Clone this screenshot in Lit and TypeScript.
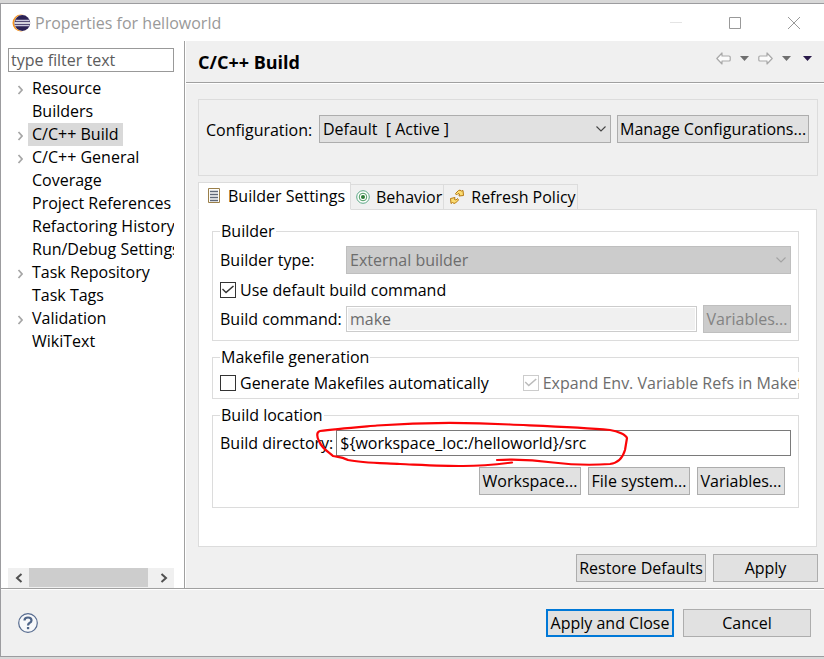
import { LitElement, html, css, svg } from "lit";
import { customElement, state } from "lit/decorators.js";
import { classMap } from "lit/directives/class-map.js";

interface Category {
  name: string;
  branch?: boolean;
}

const CATEGORIES: Category[] = [
  { name: "Resource", branch: true },
  { name: "Builders" },
  { name: "C/C++ Build", branch: true },
  { name: "C/C++ General", branch: true },
  { name: "Coverage" },
  { name: "Project References" },
  { name: "Refactoring History" },
  { name: "Run/Debug Settings" },
  { name: "Task Repository", branch: true },
  { name: "Task Tags" },
  { name: "Validation", branch: true },
  { name: "WikiText" },
];

const chevron = html`<svg class="chevron" width="10" height="6" viewBox="0 0 10 6" aria-hidden="true">
  <path d="M0.5 0.5 5 5 9.5 0.5" fill="none" stroke="currentColor" stroke-width="1.1" />
</svg>`;

const backArrow = svg`<path d="M.8 6.500 6 1V4H13Q14.200 4 14.200 5V8Q14.200 9 13 9H6V12Z" fill="#fbfbfb" stroke="#a9a9a9" stroke-width="1.2" stroke-linejoin="round"/>`;

@customElement("app-root")
export class AppRoot extends LitElement {
  @state() private selected = "C/C++ Build";

  static styles = css`
    :host {
      display: block;
      font: 16px/20px "Open Sans", "Noto Sans", sans-serif;
      color: #000;
      --face: #f0f0f0;
      --line: #a0a0a0;
      --soft: #dcdcdc;
    }
    * {
      box-sizing: border-box;
    }
    .desktop {
      display: flex;
      flex-direction: column;
      min-height: 100vh;
      padding: 3px 0 2px;
      background: #d8d8d8;
    }
    .window {
      flex: 1;
      display: flex;
      flex-direction: column;
      border: 1px solid #9c9c9f;
      border-right: 0;
      background: #fff;
    }
    .titlebar {
      display: flex;
      align-items: center;
      height: 37px;
      padding: 0 23px 0 11px;
      color: #999;
    }
    .titlebar h1 {
      flex: 1;
      margin: 0 0 0 4px;
      font: inherit;
    }
    .caption-buttons {
      display: flex;
      gap: 45px;
    }
    button,
    input,
    select {
      font: inherit;
      color: inherit;
      margin: 0;
      border-radius: 0;
    }
    .bare {
      display: flex;
      padding: 0;
      border: 0;
      background: none;
    }
    .body {
      flex: 1;
      display: flex;
      min-height: 0;
    }
    .sidebar {
      width: 184px;
      flex: none;
      display: flex;
      flex-direction: column;
      padding: 7px 10px 0 7px;
      border-right: 1px solid var(--line);
    }
    .filter {
      width: 100%;
      height: 24px;
      padding: 0 2px;
      border: 1px solid #999;
      background: #fff;
    }
    .filter::placeholder {
      color: #5c5c5c;
      opacity: 1;
    }
    .tree {
      flex: 1;
      margin: 5px 0 0;
      padding: 0;
      list-style: none;
      overflow: hidden;
    }
    .node {
      display: flex;
      align-items: center;
      height: 23px;
      white-space: nowrap;
    }
    .twist {
      width: 20px;
      flex: none;
      display: flex;
      padding: 2px 0 0 9px;
    }
    .node-name {
      padding: 0 4px;
      line-height: 23px;
      border: 0;
      background: none;
    }
    .node-name.selected {
      background: #d9d9d9;
    }
    .scrollbar {
      display: flex;
      align-items: center;
      height: 20px;
      background: var(--face);
    }
    .scrollbar .bare {
      flex: none;
      width: 21px;
      justify-content: center;
    }
    .track {
      flex: 1;
      height: 20px;
      padding-right: 5px;
    }
    .thumb {
      height: 19px;
      background: #cdcdcd;
    }
    .page {
      flex: 1;
      min-width: 0;
      display: flex;
      flex-direction: column;
      margin-left: 1px;
      background: var(--face);
    }
    .page-head {
      display: flex;
      align-items: center;
      height: 42px;
      padding: 0 12px;
      border-bottom: 1px solid var(--line);
      box-shadow: 0 1px 0 #fff;
    }
    .page-head h2 {
      flex: 1;
      margin: 0;
      font: inherit;
      font-size: 18px;
      font-weight: 700;
    }
    .nav {
      display: flex;
      align-items: center;
      gap: 9px;
      margin-top: -6px;
    }
    .nav .menu {
      margin-left: 3px;
    }
    .page-body {
      flex: 1;
      display: flex;
      flex-direction: column;
      padding: 16px 6px 6px 12px;
    }
    .config {
      display: flex;
      align-items: flex-start;
      gap: 6px;
      height: 77px;
      padding: 15px 8px 0 7px;
      border: 1px solid var(--soft);
    }
    .config label {
      width: 107px;
      line-height: 30px;
      white-space: nowrap;
    }
    .combo {
      position: relative;
      flex: 1;
      min-width: 0;
      height: 28px;
    }
    .combo select {
      appearance: none;
      width: 100%;
      height: 28px;
      padding: 0 20px 0 3px;
      border: 1px solid #adadad;
      background: #e1e1e1;
    }
    .combo select:disabled {
      color: #6d6d6d;
      border-color: #bfbfbf;
      background: #ccc;
      opacity: 1;
    }
    .chevron {
      position: absolute;
      right: 5px;
      top: 11px;
      color: #444;
      pointer-events: none;
    }
    select:disabled + .chevron {
      color: #a3a3a3;
    }
    .push {
      height: 28px;
      padding: 0 2px;
      border: 1px solid #adadad;
      background: #e1e1e1;
      white-space: nowrap;
    }
    .push:disabled {
      color: #838383;
      border-color: #bfbfbf;
      background: #ccc;
    }
    .tabs {
      display: flex;
      align-items: flex-end;
      height: 34px;
      margin-bottom: -1px;
    }
    .tab {
      display: flex;
      align-items: center;
      gap: 6px;
      height: 26px;
      padding: 0 1px 0 5px;
      border: 1px solid var(--soft);
      border-left: 0;
      background: var(--face);
      white-space: nowrap;
    }
    .tab.active {
      z-index: 1;
      height: 28px;
      padding: 0 5px 0 7px;
      border-left: 1px solid var(--soft);
      border-bottom-color: #fff;
      background: #fff;
    }
    .panel {
      flex: 1;
      display: flex;
      flex-direction: column;
      gap: 6px;
      margin-right: 1px;
      padding: 11px 17px 11px 13px;
      border: 1px solid var(--soft);
      background: #fff;
    }
    fieldset {
      min-width: 0;
      margin: 0;
      padding: 5px 7px;
      border: 1px solid var(--soft);
    }
    legend {
      padding: 0 1px;
      height: 20px;
    }
    .builder {
      display: grid;
      grid-template-columns: 120px minmax(0, 1fr) auto;
      gap: 5px 6px;
      align-items: center;
      padding-bottom: 2px;
      white-space: nowrap;
    }
    .span2 {
      grid-column: span 2;
    }
    .span3 {
      grid-column: span 3;
    }
    .check {
      display: flex;
      align-items: center;
      gap: 4px;
      height: 21px;
      white-space: nowrap;
    }
    .check input {
      appearance: none;
      flex: none;
      width: 16px;
      height: 16px;
      border: 1px solid #333;
      background: #fff;
    }
    .check input:checked::before {
      content: "";
      display: block;
      width: 14px;
      height: 14px;
      background: #333;
      clip-path: polygon(1px 7px, 2px 6px, 5px 9px, 12px 3px, 13px 4px, 5px 11px);
    }
    .check input:disabled {
      border-color: #ccc;
    }
    .check input:disabled::before {
      background: #bbb;
    }
    .check.off {
      color: #6d6d6d;
      background: #fff;
    }
    .text {
      flex: 1;
      min-width: 0;
      height: 26px;
      padding: 0 3px;
      border: 1px solid #7a7a7a;
      background: #fff;
    }
    .text:disabled {
      color: #6d6d6d;
      border-color: #ccc;
      background: var(--face);
      box-shadow: inset 0 0 0 1px #fff;
    }
    .makefile {
      display: flex;
      gap: 34px;
    }
    .makefile .off {
      flex: 1;
      min-width: 0;
      margin-right: -8px;
      overflow: hidden;
      position: relative;
    }
    .location {
      position: relative;
    }
    .location-row {
      display: flex;
      align-items: center;
      gap: 3px;
    }
    .buttons {
      display: flex;
      justify-content: flex-end;
      gap: 7px;
    }
    .location .buttons {
      padding: 11px 6px 7px;
    }
    .markup {
      position: absolute;
      left: 92px;
      top: -10px;
      pointer-events: none;
      overflow: visible;
    }
    .page-body > .buttons {
      margin-top: 7px;
    }
    .manage {
      width: 192px;
    }
    .browse {
      width: 102px;
    }
    .variables {
      width: 88px;
    }
    .restore {
      width: 130px;
    }
    .apply {
      width: 105px;
    }
    .footer {
      display: flex;
      align-items: center;
      gap: 9px;
      height: 68px;
      padding: 0 13px 0 17px;
      border-top: 1px solid var(--line);
      box-shadow: inset 0 1px 0 #fff;
      background: var(--face);
    }
    .help {
      margin-right: auto;
    }
    .wide {
      width: 128px;
      padding: 0;
    }
    .default {
      border: 2px solid #0078d7;
    }
  `;

  private renderNode(c: Category) {
    return html`<li class="node">
      <span class="twist">
        ${c.branch
          ? html`<svg width="6" height="10" viewBox="0 0 6 10" aria-hidden="true">
              <path d="M1.500 1 5 5 1.500 9" fill="none" stroke="#a6a6a6" stroke-width="1.700" />
            </svg>`
          : null}
      </span>
      <button
        class=${classMap({ "node-name": true, selected: c.name === this.selected })}
        @click=${() => (this.selected = c.name)}
      >${c.name}</button>
    </li>`;
  }

  private renderTitle() {
    return html`<header class="titlebar">
      <svg width="19" height="18" viewBox="0 0 19 18" aria-hidden="true">
        <circle cx="9" cy="9" r="8.500" fill="#f7941e" />
        <circle cx="10.500" cy="9" r="8.300" fill="#fff" />
        <circle cx="10.300" cy="9" r="7.900" fill="#2c2255" />
        <path d="M3.500 6.500H17.500M3 11.500H17.500" stroke="#c9c7dc" stroke-width="1.300" />
        <path d="M2.500 9H18" stroke="#fff" stroke-width="1.600" />
      </svg>
      <h1>Properties for helloworld</h1>
      <div class="caption-buttons">
        <button class="bare" aria-label="Minimize">
          <svg width="14" height="14" viewBox="0 0 14 14"><path d="M1 6.500H13" stroke="#e4e4e4" /></svg>
        </button>
        <button class="bare" aria-label="Maximize">
          <svg width="14" height="14" viewBox="0 0 14 14"><path d="M1.500 1.500H12.500V12.500H1.500Z" fill="none" stroke="#999" /></svg>
        </button>
        <button class="bare" aria-label="Close">
          <svg width="14" height="14" viewBox="0 0 14 14"><path d="M1 1 13 13M13 1 1 13" stroke="#999" /></svg>
        </button>
      </div>
    </header>`;
  }

  private renderNav() {
    const caret = (fill: string) => html`<svg width="9" height="5" viewBox="0 0 9 5">
      <path d="M0 0H9L4.500 5Z" fill=${fill} />
    </svg>`;
    return html`<div class="nav">
      <button class="bare" aria-label="Back"><svg width="15" height="13" viewBox="0 0 15 13">${backArrow}</svg></button>
      <button class="bare" aria-label="Back history">${caret("#6f6f6f")}</button>
      <button class="bare" aria-label="Forward">
        <svg width="15" height="13" viewBox="0 0 15 13"><g transform="matrix(-1 0 0 1 15 0)">${backArrow}</g></svg>
      </button>
      <button class="bare" aria-label="Forward history">${caret("#6f6f6f")}</button>
      <button class="bare menu" aria-label="Menu">${caret("#2a1a4a")}</button>
    </div>`;
  }

  private renderTabs() {
    return html`<div class="tabs" role="tablist">
      <button class="tab active" role="tab" aria-selected="true">
        <svg width="16" height="16" viewBox="0 0 16 16" aria-hidden="true">
          <path d="M2.500 0.500H13.500V14.500H2.500Z" fill="#fdfdfb" stroke="#9a7f4a" />
          <path d="M4 3.500H12M4 6.500H12M4 9.500H12M4 12.500H12" stroke="#5f6878" stroke-width="1.300" />
        </svg>
        Builder Settings
      </button>
      <button class="tab" role="tab" aria-selected="false">
        <svg width="14" height="14" viewBox="0 0 14 14" aria-hidden="true">
          <circle cx="7" cy="7" r="6.300" fill="#fff" stroke="#5aa784" />
          <circle cx="7" cy="7" r="3.800" fill="#fff" stroke="#4b9a60" />
          <circle cx="7" cy="7" r="2" fill="#2c7a35" />
        </svg>
        Behavior
      </button>
      <button class="tab" role="tab" aria-selected="false">
        <svg width="16" height="16" viewBox="0 0 16 16" aria-hidden="true">
          <path d="M6.500 4.500 9.500 1.500Q11 .500 12.500 2L14 1.500 14.500 6.500 10 7 10.500 5 9 4.500 7.500 6Z" fill="#fbdc72" stroke="#b77a12" stroke-linejoin="round" />
          <path d="M9.500 11 6.500 14Q5 15 3.500 13.500L2 14.500 1.500 9.500 6 8.500 5.500 10.500 7 11 8.500 9.500Z" fill="#fbdc72" stroke="#b77a12" stroke-linejoin="round" />
        </svg>
        Refresh Policy
      </button>
    </div>`;
  }

  render() {
    return html`<div class="desktop"><div class="window">
      ${this.renderTitle()}
      <div class="body">
        <nav class="sidebar">
          <input class="filter" placeholder="type filter text" aria-label="type filter text" />
          <ul class="tree">${CATEGORIES.map((c) => this.renderNode(c))}</ul>
          <div class="scrollbar">
            <button class="bare" aria-label="Scroll left">
              <svg width="8" height="10" viewBox="0 0 8 10"><path d="M6.500 1 2 5 6.500 9" fill="none" stroke="#505050" stroke-width="2" /></svg>
            </button>
            <div class="track"><div class="thumb"></div></div>
            <button class="bare" aria-label="Scroll right">
              <svg width="8" height="10" viewBox="0 0 8 10"><path d="M1.500 1 6 5 1.500 9" fill="none" stroke="#505050" stroke-width="2" /></svg>
            </button>
          </div>
        </nav>
        <main class="page">
          <div class="page-head"><h2>C/C++ Build</h2>${this.renderNav()}</div>
          <div class="page-body">
            <div class="config">
              <label for="configuration">Configuration:</label>
              <div class="combo">
                <select id="configuration"><option>Default&nbsp; [ Active ]</option></select>
                ${chevron}
              </div>
              <button class="push manage">Manage Configurations...</button>
            </div>
            ${this.renderTabs()}
            <div class="panel">
              <fieldset>
                <legend>Builder</legend>
                <div class="builder">
                  <label for="type">Builder type:</label>
                  <div class="combo span2">
                    <select id="type" disabled><option>External builder</option></select>
                    ${chevron}
                  </div>
                  <label class="check span3"><input type="checkbox" checked />Use default build command</label>
                  <label for="command">Build command:</label>
                  <input class="text" id="command" value="make" disabled />
                  <button class="push variables" disabled>Variables...</button>
                </div>
              </fieldset>
              <fieldset>
                <legend>Makefile generation</legend>
                <div class="makefile">
                  <label class="check"><input type="checkbox" />Generate Makefiles automatically</label>
                  <label class="check off"><input type="checkbox" checked disabled />Expand Env. Variable Refs in Makefiles</label>
                </div>
              </fieldset>
              <fieldset>
                <legend>Build location</legend>
                <div class="location">
                  <div class="location-row">
                    <label for="directory">Build directory:</label>
                    <input class="text" id="directory" value="\${workspace_loc:/helloworld}/src" />
                  </div>
                  <div class="buttons">
                    <button class="push browse">Workspace...</button>
                    <button class="push browse">File system...</button>
                    <button class="push variables">Variables...</button>
                  </div>
                  <svg class="markup" width="320" height="50" viewBox="312 420 320 50" aria-hidden="true">
                    <path
                      d="M497 460C515 459 535 460 553 462.500C573 465 596 465 610 464C618 463 623 457 625 450L627 438C626 435 618 431 610 430C580 427 545 426 510 424.500C465 422 423 422 377 425.500C360 427 335 429 320 431C316 432 317 437 319 441C322 449 329 452 333 456C337 457 341 456 348 460C362 463 380 463 400 464C425 465 445 466 463 466C480 466 500 464 512 462.500"
                      fill="none" stroke="#fb0407" stroke-width="2.200" stroke-linecap="round" stroke-linejoin="round"
                    />
                  </svg>
                </div>
              </fieldset>
            </div>
            <div class="buttons">
              <button class="push restore">Restore Defaults</button>
              <button class="push apply">Apply</button>
            </div>
          </div>
        </main>
      </div>
      <footer class="footer">
        <button class="bare help" aria-label="Help">
          <svg width="20" height="20" viewBox="0 0 20 20">
            <circle cx="10" cy="10" r="9.300" fill="#f7f8fa" stroke="#566b8f" stroke-width="1.200" />
            <path d="M6.500 7.500Q6.500 4.500 10 4.500T13.500 7.500Q13.500 9 11.500 10Q10 11 10 12.500" fill="none" stroke="#4f6588" stroke-width="2.200" />
            <path d="M8.900 14H11.200V16.200H8.900Z" fill="#4f6588" />
          </svg>
        </button>
        <button class="push wide default">Apply and Close</button>
        <button class="push wide">Cancel</button>
      </footer>
    </div></div>`;
  }
}
